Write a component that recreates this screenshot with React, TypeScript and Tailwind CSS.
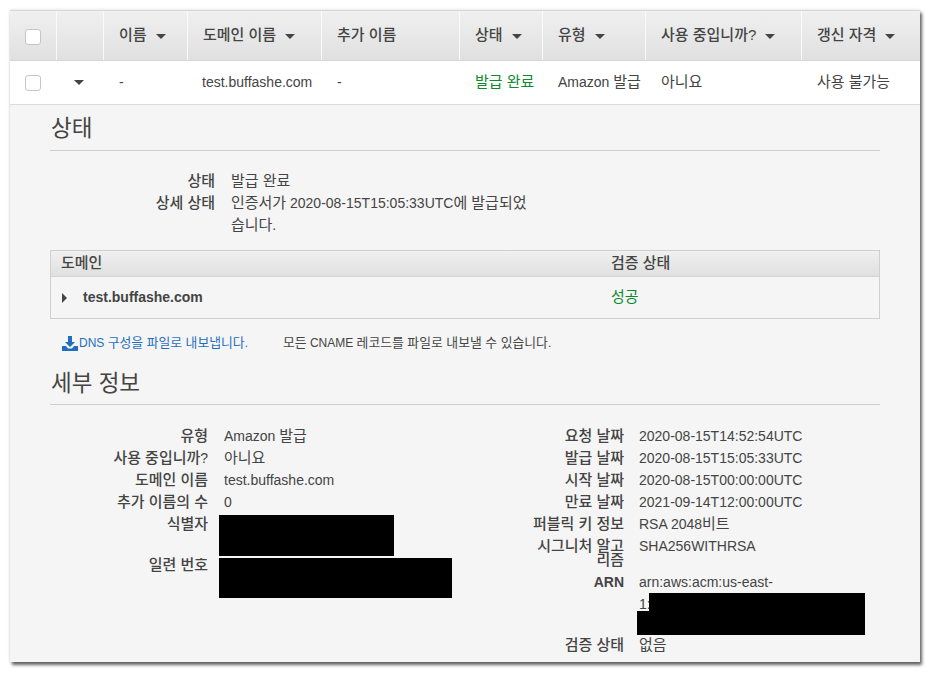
import React from "react";

const FONT = "font-['Liberation_Sans','Noto_Sans_CJK_KR',sans-serif]";

function K({ t }: { t: string }) {
  const parts = t.split(/([\uAC00-\uD7A3]+(?: [\uAC00-\uD7A3]+)*)/);
  return (
    <>
      {parts.map((p, i) =>
        i % 2 === 1 ? (
          <span key={i} className="text-[1.07em]">{p}</span>
        ) : (
          <span key={i}>{p}</span>
        )
      )}
    </>
  );
}

function Caret() {
  return <span className="ml-[9px] inline-block w-0 h-0 border-x-[5px] border-x-transparent border-t-[5px] border-t-[#444] mt-[2px]" />;
}

function Check() {
  return <span className="block w-[16px] h-[16px] rounded-[3px] bg-white border border-[#c6c6c6]" />;
}

const heads: [string, boolean, string][] = [
  ["이름", true, "w-[84px]"],
  ["도메인 이름", true, "w-[134px]"],
  ["추가 이름", false, "w-[138px]"],
  ["상태", true, "w-[83px]"],
  ["유형", true, "w-[103px]"],
  ["사용 중입니까?", true, "w-[156px]"],
  ["갱신 자격", true, "flex-1"],
];

const cells: [string, string][] = [
  ["-", "w-[83px]"],
  ["test.buffashe.com", "w-[135px]"],
  ["-", "w-[138px]"],
  ["발급 완료", "w-[83px] text-[#0b8a2e]"],
  ["Amazon 발급", "w-[103px]"],
  ["아니요", "w-[156px]"],
  ["사용 불가능", "flex-1"],
];

function Row({ label, children, labelW }: { label: string; children: React.ReactNode; labelW: string }) {
  return (
    <div className="flex">
      <div className={`${labelW} text-right font-medium text-[#444] leading-[22px] shrink-0 whitespace-nowrap`}><K t={label} /></div>
      <div className="ml-[16px] leading-[22px] text-[#444]">{children}</div>
    </div>
  );
}

function Row2({ label, children }: { label: string; children: React.ReactNode }) {
  return (
    <div className="flex">
      <div className="w-[144px] text-right font-medium leading-[22px] whitespace-nowrap"><K t={label} /></div>
      <div className="ml-[15px] leading-[22px]">{children}</div>
    </div>
  );
}

export default function App() {
  return (
    <div className={`${FONT} w-[931px] h-[673px] bg-white pt-[10px] pl-[10px] text-[14px] text-[#444] overflow-hidden`}>
      <div className="w-[910px] h-[652px] bg-[#f5f5f5] overflow-hidden shadow-[2px_3px_3px_rgba(0,0,0,0.6),0_0_3px_rgba(0,0,0,0.15)]">
        <div className="flex h-[51px] bg-gradient-to-b from-[#f0f0f0] to-[#e0e0e0] border-t border-t-[#d8d8d8] border-b border-b-[#d5d5d5] text-[#444]">
          <div className="w-[46px] flex items-center pl-[15px] pt-[2px]"><Check /></div>
          <div className="w-[47px] border-l border-l-[#fafafa]" />
          {heads.map(([t, c, w]) => (
            <div key={t} className={`${w} border-l border-l-[#fafafa] pl-[15px] flex items-center whitespace-nowrap`}>
              <span className="text-[15px] font-medium">{t}</span>
              {c && <Caret />}
            </div>
          ))}
        </div>
        <div className="flex h-[44px] bg-white border-b border-b-[#dcdcdc] items-center">
          <div className="w-[46px] pl-[15px]"><Check /></div>
          <div className="w-[47px] pl-[18px] flex"><span className="w-0 h-0 border-x-[5px] border-x-transparent border-t-[5px] border-t-[#444]" /></div>
          {cells.map(([t, w], i) => (
            <div key={i} className={`${w} pl-[16px] whitespace-nowrap`}><K t={t} /></div>
          ))}
        </div>

        <div className="px-[40px]">
          <h2 className="text-[22.5px] leading-[30px] pt-[9px] pl-px border-b border-b-[#cfcfcf] text-[#444] font-normal h-[46px]">상태</h2>
          <div className="pt-[19px] flex flex-col">
            <Row label="상태" labelW="w-[165px]"><K t="발급 완료" /></Row>
            <Row label="상세 상태" labelW="w-[165px]">
              <div className="w-[300px]"><K t="인증서가 " />2020-08-15T15:05:33UTC<K t="에 발급되었" /><br /><K t="습니다." /></div>
            </Row>
          </div>

          <div className="mt-[14px] border border-[#cfcfcf]">
            <div className="flex h-[26px] items-center bg-gradient-to-b from-[#f0f0f0] to-[#e0e0e0] border-b border-b-[#d5d5d5] font-medium">
              <div className="w-[560px] pl-[10px]"><K t="도메인" /></div>
              <div><K t="검증 상태" /></div>
            </div>
            <div className="flex h-[41px] items-center">
              <div className="w-[560px] pl-[11px] flex items-center">
                <span className="w-0 h-0 border-y-[5px] border-y-transparent border-l-[5px] border-l-[#444]" />
                <span className="ml-[16px] font-bold">test.buffashe.com</span>
              </div>
              <div className="text-[#0b8a2e]"><K t="성공" /></div>
            </div>
          </div>

          <div className="mt-[15px] flex items-center h-[18px] text-[12px] pl-[12px]">
            <svg width="16" height="15" viewBox="0 0 16 15" className="shrink-0">
              <path d="M6 0h4v6h3l-5 5-5-5h3z" fill="#1f6fc0" />
              <path d="M0 10h4l2 2.5h4L12 10h4v5H0z" fill="#1f6fc0" />
            </svg>
            <span className="text-[#1f6fc0] ml-px"><K t="DNS 구성을 파일로 내보냅니다." /></span>
            <span className="ml-[35px]"><K t="모든 CNAME 레코드를 파일로 내보낼 수 있습니다." /></span>
          </div>

          <h2 className="mt-[17px] text-[22.5px] leading-[30px] pl-px border-b border-b-[#cfcfcf] text-[#444] font-normal h-[36px]">세부 정보</h2>

          <div className="pt-[20px] flex">
            <div className="w-[430px] flex flex-col">
              <Row label="유형" labelW="w-[158px]"><K t="Amazon 발급" /></Row>
              <Row label="사용 중입니까?" labelW="w-[158px]"><K t="아니요" /></Row>
              <Row label="도메인 이름" labelW="w-[158px]">test.buffashe.com</Row>
              <Row label="추가 이름의 수" labelW="w-[158px]">0</Row>
              <div className="flex h-[41px]">
                <div className="w-[158px] text-right font-medium leading-[22px]"><K t="식별자" /></div>
                <div className="ml-[11px] mt-[2px] w-[175px] h-[41px] bg-black" />
              </div>
              <div className="flex">
                <div className="w-[158px] text-right font-medium leading-[22px]"><K t="일련 번호" /></div>
                <div className="ml-[11px] mt-[4px] w-[233px] h-[40px] bg-black" />
              </div>
            </div>
            <div className="flex flex-col">
              <Row2 label="요청 날짜">2020-08-15T14:52:54UTC</Row2>
              <Row2 label="발급 날짜">2020-08-15T15:05:33UTC</Row2>
              <Row2 label="시작 날짜">2020-08-15T00:00:00UTC</Row2>
              <Row2 label="만료 날짜">2021-09-14T12:00:00UTC</Row2>
              <Row2 label="퍼블릭 키 정보">RSA 2048<K t="비트" /></Row2>
              <div className="flex h-[36px]">
                <div className="w-[144px] text-right font-medium leading-[14px] pt-[4px]"><K t="시그니처 알고" /><br /><K t="리즘" /></div>
                <div className="ml-[15px] leading-[22px]">SHA256WITHRSA</div>
              </div>
              <div className="flex relative h-[63px]">
                <div className="w-[144px] text-right font-bold leading-[22px]">ARN</div>
                <div className="ml-[15px] leading-[22px] w-[200px]">arn:aws:acm:us-east-<br />1:</div>
                <div className="absolute left-[169px] top-[22px] w-[216px] h-[18px] bg-black" />
                <div className="absolute left-[157px] top-[40px] w-[228px] h-[24px] bg-black" />
              </div>
              <Row2 label="검증 상태"><K t="없음" /></Row2>
            </div>
          </div>
        </div>
      </div>
    </div>
  );
}
